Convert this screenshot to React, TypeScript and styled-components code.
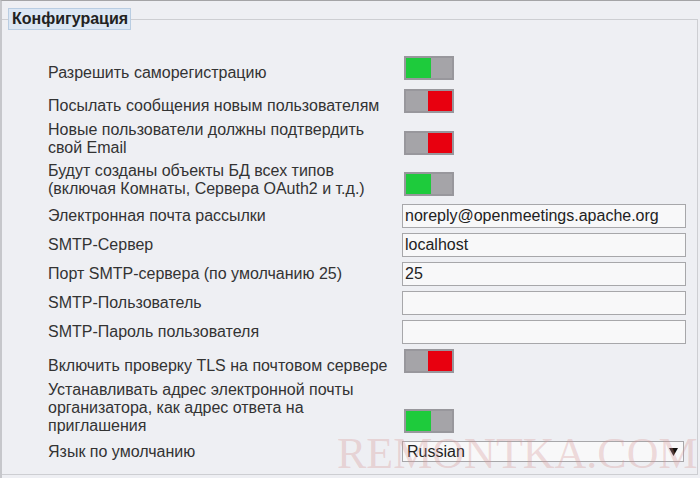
import React from "react";
import styled, { createGlobalStyle } from "styled-components";

const Global = createGlobalStyle`
  html, body { margin: 0; padding: 0; }
  body {
    background: #eeeff3;
    font-family: "Liberation Sans", Arial, sans-serif;
    color: #333333;
  }
`;

const Page = styled.div`
  position: relative;
  width: 700px;
  height: 478px;
  box-sizing: border-box;
  border-top: 1px solid #a4a4a6;
  border-left: 2px solid #c6c7cb;
  background: #eeeff3;
  overflow: hidden;
`;

const Fieldset = styled.fieldset`
  margin: 7px 2px 0 0;
  height: 467px;
  box-sizing: border-box;
  border: 1px solid #cdced2;
  border-left: none;
  padding: 26px 0 0 0;
`;

const Legend = styled.legend`
  margin-left: 6px;
  padding: 0 2px 0 3px;
  height: 20px;
  line-height: 20px;
  background: #dce7f4;
  border: 1px solid #b9cde2;
  font-weight: bold;
  font-size: 16px;
  color: #222;
`;

const Rows = styled.div`
  display: flex;
  flex-direction: column;
  padding-left: 46px;
`;

const Row = styled.div<{ $mt: number; $align: string }>`
  display: grid;
  grid-template-columns: 354px 284px;
  align-items: ${(p) => p.$align};
  margin-top: ${(p) => p.$mt}px;
`;

const Label = styled.div`
  font-size: 16px;
  line-height: 18px;
  color: #333;
`;

const ToggleBox = styled.div<{ $on: boolean }>`
  width: 50px;
  height: 24px;
  box-sizing: border-box;
  margin-left: 2px;
  margin-bottom: 2px;
  background: #a5a4a8;
  border: 2px solid #98979c;
  display: flex;
  justify-content: ${(p) => (p.$on ? "flex-start" : "flex-end")};
`;

const Knob = styled.div<{ $on: boolean }>`
  width: ${(p) => (p.$on ? 25 : 24)}px;
  height: 100%;
  background: ${(p) => (p.$on ? "#1ecb3c" : "#e8000f")};
`;

const Input = styled.input`
  width: 284px;
  height: 24px;
  box-sizing: border-box;
  border: 1px solid #a7a7aa;
  background: #f8f8f9;
  font-family: "Liberation Sans", Arial, sans-serif;
  font-size: 16px;
  color: #222;
  padding: 0 2px;
  outline: none;
`;

const SelectWrap = styled.div`
  position: relative;
  width: 282px;
  height: 21px;
`;

const Select = styled.select`
  appearance: none;
  width: 100%;
  height: 100%;
  box-sizing: border-box;
  border: 1px solid #a7a7aa;
  background: #f8f8f9;
  font-family: "Liberation Sans", Arial, sans-serif;
  font-size: 16px;
  color: #222;
  padding: 0 4px;
  outline: none;
`;

const Arrow = styled.svg`
  position: absolute;
  right: 6px;
  top: 7px;
  pointer-events: none;
`;

const Watermark = styled.div`
  position: absolute;
  left: 335px;
  top: 427px;
  font-family: "Liberation Serif", "Times New Roman", serif;
  font-size: 44px;
  color: rgba(214, 150, 150, 0.32);
  pointer-events: none;
  white-space: nowrap;
`;

const Toggle = ({ on }: { on: boolean }) => (
  <ToggleBox $on={on}>
    <Knob $on={on} />
  </ToggleBox>
);

export default function App() {
  return (
    <>
      <Global />
      <Page>
        <Fieldset>
          <Legend>Конфигурация</Legend>
          <Rows>
            <Row $mt={0} $align="end">
              <Label>Разрешить саморегистрацию</Label>
              <Toggle on />
            </Row>
            <Row $mt={7} $align="end">
              <Label>Посылать сообщения новым пользователям</Label>
              <Toggle on={false} />
            </Row>
            <Row $mt={6} $align="end">
              <Label>
                Новые пользователи должны подтвердить
                <br />
                свой Email
              </Label>
              <Toggle on={false} />
            </Row>
            <Row $mt={5} $align="end">
              <Label>
                Будут созданы объекты БД всех типов
                <br />
                (включая Комнаты, Сервера OAuth2 и т.д.)
              </Label>
              <Toggle on />
            </Row>
            <Row $mt={6} $align="center">
              <Label>Электронная почта рассылки</Label>
              <Input defaultValue="noreply@openmeetings.apache.org" />
            </Row>
            <Row $mt={5} $align="center">
              <Label>SMTP-Сервер</Label>
              <Input defaultValue="localhost" />
            </Row>
            <Row $mt={5} $align="center">
              <Label>Порт SMTP-сервера (по умолчанию 25)</Label>
              <Input defaultValue="25" />
            </Row>
            <Row $mt={5} $align="center">
              <Label>SMTP-Пользователь</Label>
              <Input defaultValue="" />
            </Row>
            <Row $mt={5} $align="center">
              <Label>SMTP-Пароль пользователя</Label>
              <Input defaultValue="" />
            </Row>
            <Row $mt={5} $align="end">
              <Label>Включить проверку TLS на почтовом сервере</Label>
              <Toggle on={false} />
            </Row>
            <Row $mt={6} $align="end">
              <Label>
                Устанавливать адрес электронной почты
                <br />
                организатора, как адрес ответа на
                <br />
                приглашения
              </Label>
              <Toggle on />
            </Row>
            <Row $mt={6} $align="center">
              <Label>Язык по умолчанию</Label>
              <SelectWrap>
                <Select defaultValue="ru">
                  <option value="ru">Russian</option>
                  <option value="en">English</option>
                </Select>
                <Arrow width="9" height="8" viewBox="0 0 9 8">
                  <path d="M0 0 H9 L4.5 8 Z" fill="#111" />
                </Arrow>
              </SelectWrap>
            </Row>
          </Rows>
        </Fieldset>
        <Watermark>REMONTKA.COM</Watermark>
      </Page>
    </>
  );
}
